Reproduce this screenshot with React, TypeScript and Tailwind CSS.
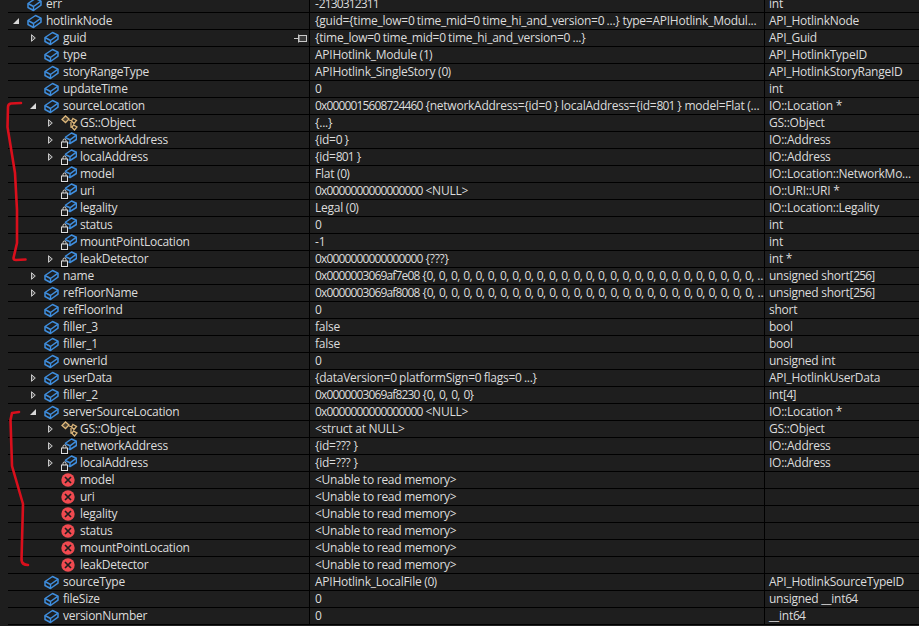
import React from 'react';

type Kind = 'field' | 'locked' | 'cls' | 'error';
type Row = {
  name: string;
  value: string;
  type: string;
  level: number;
  kind?: Kind;
  arrow?: 'open' | 'closed';
  pin?: boolean;
};

const zeros = '{' + Array(27).fill('0').join(', ') + ', ...';

const rows: Row[] = [
  { name: 'err', value: '-2130312311', type: 'int', level: 0 },
  { name: 'hotlinkNode', value: '{guid={time_low=0 time_mid=0 time_hi_and_version=0 ...} type=APIHotlink_Modul...', type: 'API_HotlinkNode', level: 0, arrow: 'open' },
  { name: 'guid', value: '{time_low=0 time_mid=0 time_hi_and_version=0 ...}', type: 'API_Guid', level: 1, arrow: 'closed', pin: true },
  { name: 'type', value: 'APIHotlink_Module (1)', type: 'API_HotlinkTypeID', level: 1 },
  { name: 'storyRangeType', value: 'APIHotlink_SingleStory (0)', type: 'API_HotlinkStoryRangeID', level: 1 },
  { name: 'updateTime', value: '0', type: 'int', level: 1 },
  { name: 'sourceLocation', value: '0x0000015608724460 {networkAddress={id=0 } localAddress={id=801 } model=Flat (...', type: 'IO::Location *', level: 1, arrow: 'open' },
  { name: 'GS::Object', value: '{...}', type: 'GS::Object', level: 2, arrow: 'closed', kind: 'cls' },
  { name: 'networkAddress', value: '{id=0 }', type: 'IO::Address', level: 2, arrow: 'closed', kind: 'locked' },
  { name: 'localAddress', value: '{id=801 }', type: 'IO::Address', level: 2, arrow: 'closed', kind: 'locked' },
  { name: 'model', value: 'Flat (0)', type: 'IO::Location::NetworkMo...', level: 2, kind: 'locked' },
  { name: 'uri', value: '0x0000000000000000 <NULL>', type: 'IO::URI::URI *', level: 2, kind: 'locked' },
  { name: 'legality', value: 'Legal (0)', type: 'IO::Location::Legality', level: 2, kind: 'locked' },
  { name: 'status', value: '0', type: 'int', level: 2, kind: 'locked' },
  { name: 'mountPointLocation', value: '-1', type: 'int', level: 2, kind: 'locked' },
  { name: 'leakDetector', value: '0x0000000000000000 {???}', type: 'int *', level: 2, arrow: 'closed', kind: 'locked' },
  { name: 'name', value: '0x0000003069af7e08 ' + zeros, type: 'unsigned short[256]', level: 1, arrow: 'closed' },
  { name: 'refFloorName', value: '0x0000003069af8008 ' + zeros, type: 'unsigned short[256]', level: 1, arrow: 'closed' },
  { name: 'refFloorInd', value: '0', type: 'short', level: 1 },
  { name: 'filler_3', value: 'false', type: 'bool', level: 1 },
  { name: 'filler_1', value: 'false', type: 'bool', level: 1 },
  { name: 'ownerId', value: '0', type: 'unsigned int', level: 1 },
  { name: 'userData', value: '{dataVersion=0 platformSign=0 flags=0 ...}', type: 'API_HotlinkUserData', level: 1, arrow: 'closed' },
  { name: 'filler_2', value: '0x0000003069af8230 {0, 0, 0, 0}', type: 'int[4]', level: 1, arrow: 'closed' },
  { name: 'serverSourceLocation', value: '0x0000000000000000 <NULL>', type: 'IO::Location *', level: 1, arrow: 'open' },
  { name: 'GS::Object', value: '<struct at NULL>', type: 'GS::Object', level: 2, arrow: 'closed', kind: 'cls' },
  { name: 'networkAddress', value: '{id=??? }', type: 'IO::Address', level: 2, arrow: 'closed', kind: 'locked' },
  { name: 'localAddress', value: '{id=??? }', type: 'IO::Address', level: 2, arrow: 'closed', kind: 'locked' },
  { name: 'model', value: '<Unable to read memory>', type: '', level: 2, kind: 'error' },
  { name: 'uri', value: '<Unable to read memory>', type: '', level: 2, kind: 'error' },
  { name: 'legality', value: '<Unable to read memory>', type: '', level: 2, kind: 'error' },
  { name: 'status', value: '<Unable to read memory>', type: '', level: 2, kind: 'error' },
  { name: 'mountPointLocation', value: '<Unable to read memory>', type: '', level: 2, kind: 'error' },
  { name: 'leakDetector', value: '<Unable to read memory>', type: '', level: 2, kind: 'error' },
  { name: 'sourceType', value: 'APIHotlink_LocalFile (0)', type: 'API_HotlinkSourceTypeID', level: 1 },
  { name: 'fileSize', value: '0', type: 'unsigned __int64', level: 1 },
  { name: 'versionNumber', value: '0', type: '__int64', level: 1 },
];

function FieldIcon() {
  return (
    <svg width="15" height="15" viewBox="0 0 15 15" fill="none" stroke="#3f8ede" strokeWidth="1.5" strokeLinejoin="round">
      <path d="M1 6.5 L8.5 1.5 L14 4.2 L14 8.2 L6.5 13.5 L1 10.5 Z" />
      <path d="M1 6.5 L6.5 9.5 L14 4.2 M6.5 9.5 L6.5 13.5" />
    </svg>
  );
}

function LockedIcon() {
  return (
    <svg width="16" height="16" viewBox="0 0 16 16" fill="none">
      <g stroke="#3f8ede" strokeWidth="1.5" strokeLinejoin="round">
        <path d="M4 5.5 L10.5 1 L15.4 3.2 L15.4 7.5 L9 11.5 L7.5 10.7" />
        <path d="M4 5.5 L9 7.8 L15.4 3.2 M9 7.8 L9 11.5" />
      </g>
      <rect x="0.5" y="10" width="6" height="5.5" fill="#1e1e1e" stroke="#dcdcdc" />
      <path d="M2 10 V8.5 A1.5 1.5 0 0 1 5 8.5 V10" stroke="#dcdcdc" />
    </svg>
  );
}

function ClassIcon() {
  return (
    <svg width="17" height="16" viewBox="0 0 17 16" fill="none" stroke="#dcb67a" strokeWidth="1.3">
      <path d="M1 4.5 L4.5 1 L8 4 L4.5 7.5 Z" fill="#dcb67a" fillOpacity="0.25" />
      <path d="M8 5 L11 6 M10 7 L10 12 L12 12" />
      <path d="M12 3.5 L15.5 5.5 L13 8.5 L10.5 6 Z" />
      <path d="M12.5 10 L16 12 L13.5 15 L11 12.5 Z" />
    </svg>
  );
}

function ErrorIcon() {
  return (
    <svg width="14" height="14" viewBox="0 0 14 14">
      <circle cx="7" cy="7" r="6.7" fill="#f04a50" />
      <path d="M4 4 L10 10 M10 4 L4 10" stroke="#1e1e1e" strokeWidth="1.7" />
    </svg>
  );
}

function Arrow({ dir }: { dir: 'open' | 'closed' }) {
  if (dir === 'open') {
    return (
      <svg width="6" height="6" viewBox="0 0 6 6">
        <path d="M6 0 L6 6 L0 6 Z" fill="#d8d8d8" />
      </svg>
    );
  }
  return (
    <svg width="5" height="8" viewBox="0 0 5 8">
      <path d="M0.5 0.7 L4.3 4 L0.5 7.3 Z" fill="#555" stroke="#c8c8c8" />
    </svg>
  );
}

function Pin() {
  return (
    <svg width="13" height="9" viewBox="0 0 13 9" fill="none" stroke="#c8c8c8">
      <path d="M0 4.5 H4" />
      <path d="M4.5 0.5 V8.5" />
      <rect x="5" y="1.5" width="7.5" height="6" fill="#3a3a3a" />
    </svg>
  );
}

function RowIcon({ kind }: { kind: Kind }) {
  if (kind === 'locked') return <LockedIcon />;
  if (kind === 'cls') return <ClassIcon />;
  if (kind === 'error') return <ErrorIcon />;
  return <FieldIcon />;
}

// Open Sans digits run wider than the reference's, so number runs get tighter tracking
function Label({ text }: { text: string }) {
  const parts = text.split(/(0x[0-9a-f]+|\d+|, )/).filter(Boolean);
  return (
    <>
      {parts.map((part, i) => {
        if (part === ', ') return <span key={i}>{part}</span>;
        if (/^(0x[0-9a-f]+|\d+)$/.test(part)) {
          return (
            <span key={i} className="tracking-[-0.85px]">
              {part}
            </span>
          );
        }
        return (
          <span key={i} className="tracking-[-0.25px]">
            {part}
          </span>
        );
      })}
    </>
  );
}

// tree gutter: each level pushes the arrow + icon 17px to the right
const indents = ['pl-[5px]', 'pl-[22px]', 'pl-[39px]'];

export default function App() {
  return (
    <div
      className="relative h-[626px] w-[919px] overflow-hidden bg-[#1e1e1e] text-[12px] text-[#dcdcdc]"
      style={{ fontFamily: '"Open Sans", "Noto Sans", sans-serif' }}
    >
      <div className="-mt-[4px] pl-[8px]">
        {rows.map((row, i) => (
          <div key={i} className="flex h-[17px] items-center border-b border-black leading-[16px]">
            <div className={`flex h-full w-[302px] shrink-0 items-center border-r border-black ${indents[row.level]}`}>
              <span className="flex w-[6px] shrink-0 justify-center">
                {row.arrow && <Arrow dir={row.arrow} />}
              </span>
              <span className="ml-[8px] flex w-[19px] shrink-0 items-center">
                <RowIcon kind={row.kind ?? 'field'} />
              </span>
              <span className="whitespace-nowrap">
                <Label text={row.name} />
              </span>
              {row.pin && (
                <span className="mr-[2px] ml-auto">
                  <Pin />
                </span>
              )}
            </div>
            <div className="h-full w-[455px] shrink-0 overflow-hidden border-r border-black pl-[5px] whitespace-nowrap">
              <Label text={row.value} />
            </div>
            <div className="h-full min-w-0 flex-1 overflow-hidden pl-[4px] whitespace-nowrap">
              <Label text={row.type} />
            </div>
          </div>
        ))}
      </div>

      {/* hand-drawn red annotations on top of the tree */}
      <svg className="pointer-events-none absolute top-0 left-0" width="40" height="626" fill="none" stroke="#d90f1c" strokeWidth="2.6" strokeLinecap="round" strokeLinejoin="round">
        <path d="M21 103 L11 103.5 Q8 104 8 107 L7.5 127 L15 173 L17 210 L17 243 L13.5 258 Q13.5 260 16 260 L25.5 259.5" />
        <path d="M19 412 L12 413 L10.5 420 L12 466 L23 504 L21.5 560 Q22 565 28 565" />
      </svg>
    </div>
  );
}
